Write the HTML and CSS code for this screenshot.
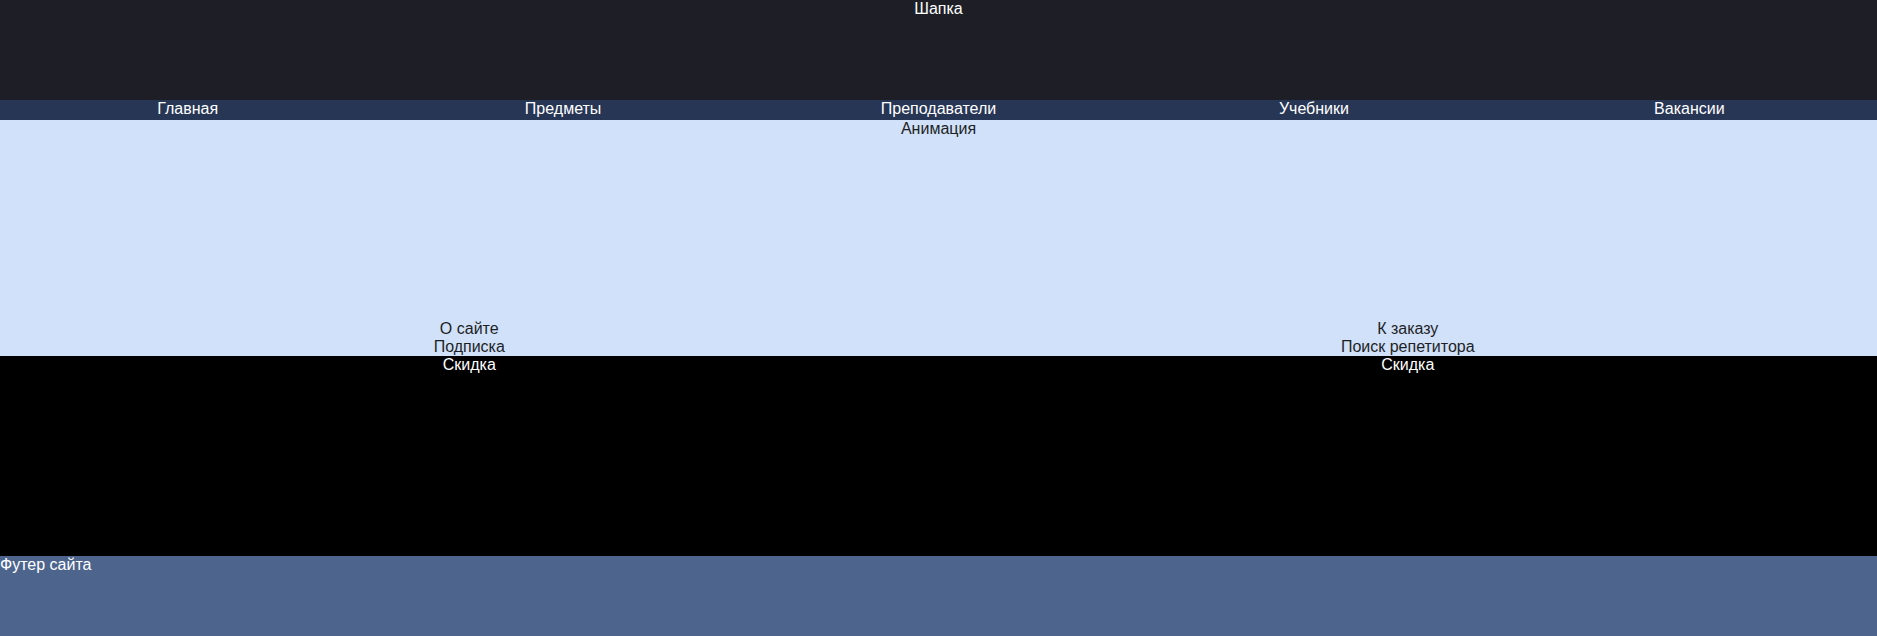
FILE: index.html
```html
<!DOCTYPE html>
<html lang="ru">
<head>
<meta charset="utf-8">
<title>Репетиторы</title>
<link rel="stylesheet" href="styles.css">
</head>
<body>
<header class="header">Шапка</header>
<nav class="nav">
  <div class="nav-item">Главная</div>
  <div class="nav-item">Предметы</div>
  <div class="nav-item">Преподаватели</div>
  <div class="nav-item">Учебники</div>
  <div class="nav-item">Вакансии</div>
</nav>
<section class="animation">Анимация</section>
<main class="columns">
  <div class="col">
    <div class="col-text">О сайте</div>
    <div class="col-text">Подписка</div>
    <div class="discount">Скидка</div>
  </div>
  <div class="col">
    <div class="col-text">К заказу</div>
    <div class="col-text">Поиск репетитора</div>
    <div class="discount">Скидка</div>
  </div>
</main>
<footer class="footer">Футер сайта</footer>
</body>
</html>
```
FILE: styles.css
```css
html, body {
  margin: 0;
  padding: 0;
}
body {
  font-family: "Liberation Sans", Arial, sans-serif;
  font-size: 16px;
  background: #d0e1f9;
}
.header {
  height: 100px;
  background: #1e1f26;
  color: #ffffff;
  text-align: center;
}
.nav {
  display: flex;
  height: 20px;
  background: #283655;
  color: #ffffff;
}
.nav-item {
  flex: 1;
  text-align: center;
}
.animation {
  height: 200px;
  background: #d0e1f9;
  color: #1e1f26;
  text-align: center;
}
.columns {
  display: flex;
}
.col {
  flex: 1;
  text-align: center;
  color: #1e1f26;
  background: #d0e1f9;
}
.discount {
  height: 200px;
  background: #000000;
  color: #ffffff;
}
.footer {
  height: 80px;
  background: #4d648d;
  color: #ffffff;
}
```
